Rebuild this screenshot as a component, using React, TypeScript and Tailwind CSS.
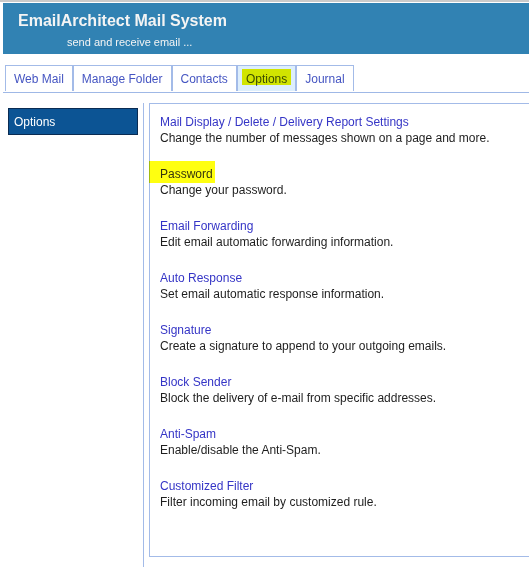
import React from "react";

const items = [
  ["Mail Display / Delete / Delivery Report Settings", "Change the number of messages shown on a page and more."],
  ["Password", "Change your password."],
  ["Email Forwarding", "Edit email automatic forwarding information."],
  ["Auto Response", "Set email automatic response information."],
  ["Signature", "Create a signature to append to your outgoing emails."],
  ["Block Sender", "Block the delivery of e-mail from specific addresses."],
  ["Anti-Spam", "Enable/disable the Anti-Spam."],
  ["Customized Filter", "Filter incoming email by customized rule."],
];

const tabs = ["Web Mail", "Manage Folder", "Contacts", "Options", "Journal"];

export default function App() {
  return (
    <div className="w-[529px] h-[567px] overflow-hidden bg-white font-['Liberation_Sans',Arial,sans-serif]">
      <div className="h-[2px] bg-[#cacaca]" />
      <div className="mt-[1px] ml-[3px] h-[51px] bg-[#3182b3] pl-[15px] pt-[9px] text-[#f4f4f4]">
        <div className="text-[16px] font-bold leading-[18px]">EmailArchitect Mail System</div>
        <div className="ml-[49px] mt-[6px] text-[11px] leading-[13px]">send and receive email ...</div>
      </div>

      <div className="ml-[3px] mt-[11px] flex border-b border-[#9fb8e6] pl-[2px]">
        {tabs.map((t) => {
          const active = t === "Options";
          return (
            <div
              key={t}
              className={
                "relative mb-[1px] flex h-[26px] items-center border border-b-0 border-[#a3bbe8] px-2 pt-[1px] text-[12px] " +
                (active ? "bg-[#ddeefc] text-[#3e4fc0]" : "bg-white text-[#4555c2]")
              }
            >
              <span className="relative">
                {t}
                {active && (
                  <span className="absolute left-[-4px] top-[-1px] h-[16px] w-[49px] bg-[#f2f500] mix-blend-multiply" />
                )}
              </span>
            </div>
          );
        })}
      </div>

      <div className="ml-[3px] mt-[10px] flex h-[464px]">
        <div className="w-[141px] shrink-0 border-r border-[#a3bbe8] pl-[5px] pt-[5px]">
          <div className="flex h-[27px] w-[130px] items-center border border-[#0a2b52] bg-[#0c5494] pl-[5px] text-[12px] text-white">
            Options
          </div>
        </div>
        <div className="ml-[5px] h-[454px] flex-1 border border-r-0 border-[#a3bbe8] pl-[10px] pt-[10px] text-[12px] leading-[16px]">
          <div className="flex flex-col gap-[20px]">
            {items.map(([title, desc]) => (
              <div key={title}>
                <div className="relative w-fit text-[#3535c6]">
                  {title}
                  {title === "Password" && (
                    <span className="absolute left-[-11px] top-[-5px] h-[22px] w-[66px] bg-[#ffff10] mix-blend-multiply" />
                  )}
                </div>
                <div className="text-[#1e1e1e]">{desc}</div>
              </div>
            ))}
          </div>
        </div>
      </div>
    </div>
  );
}
